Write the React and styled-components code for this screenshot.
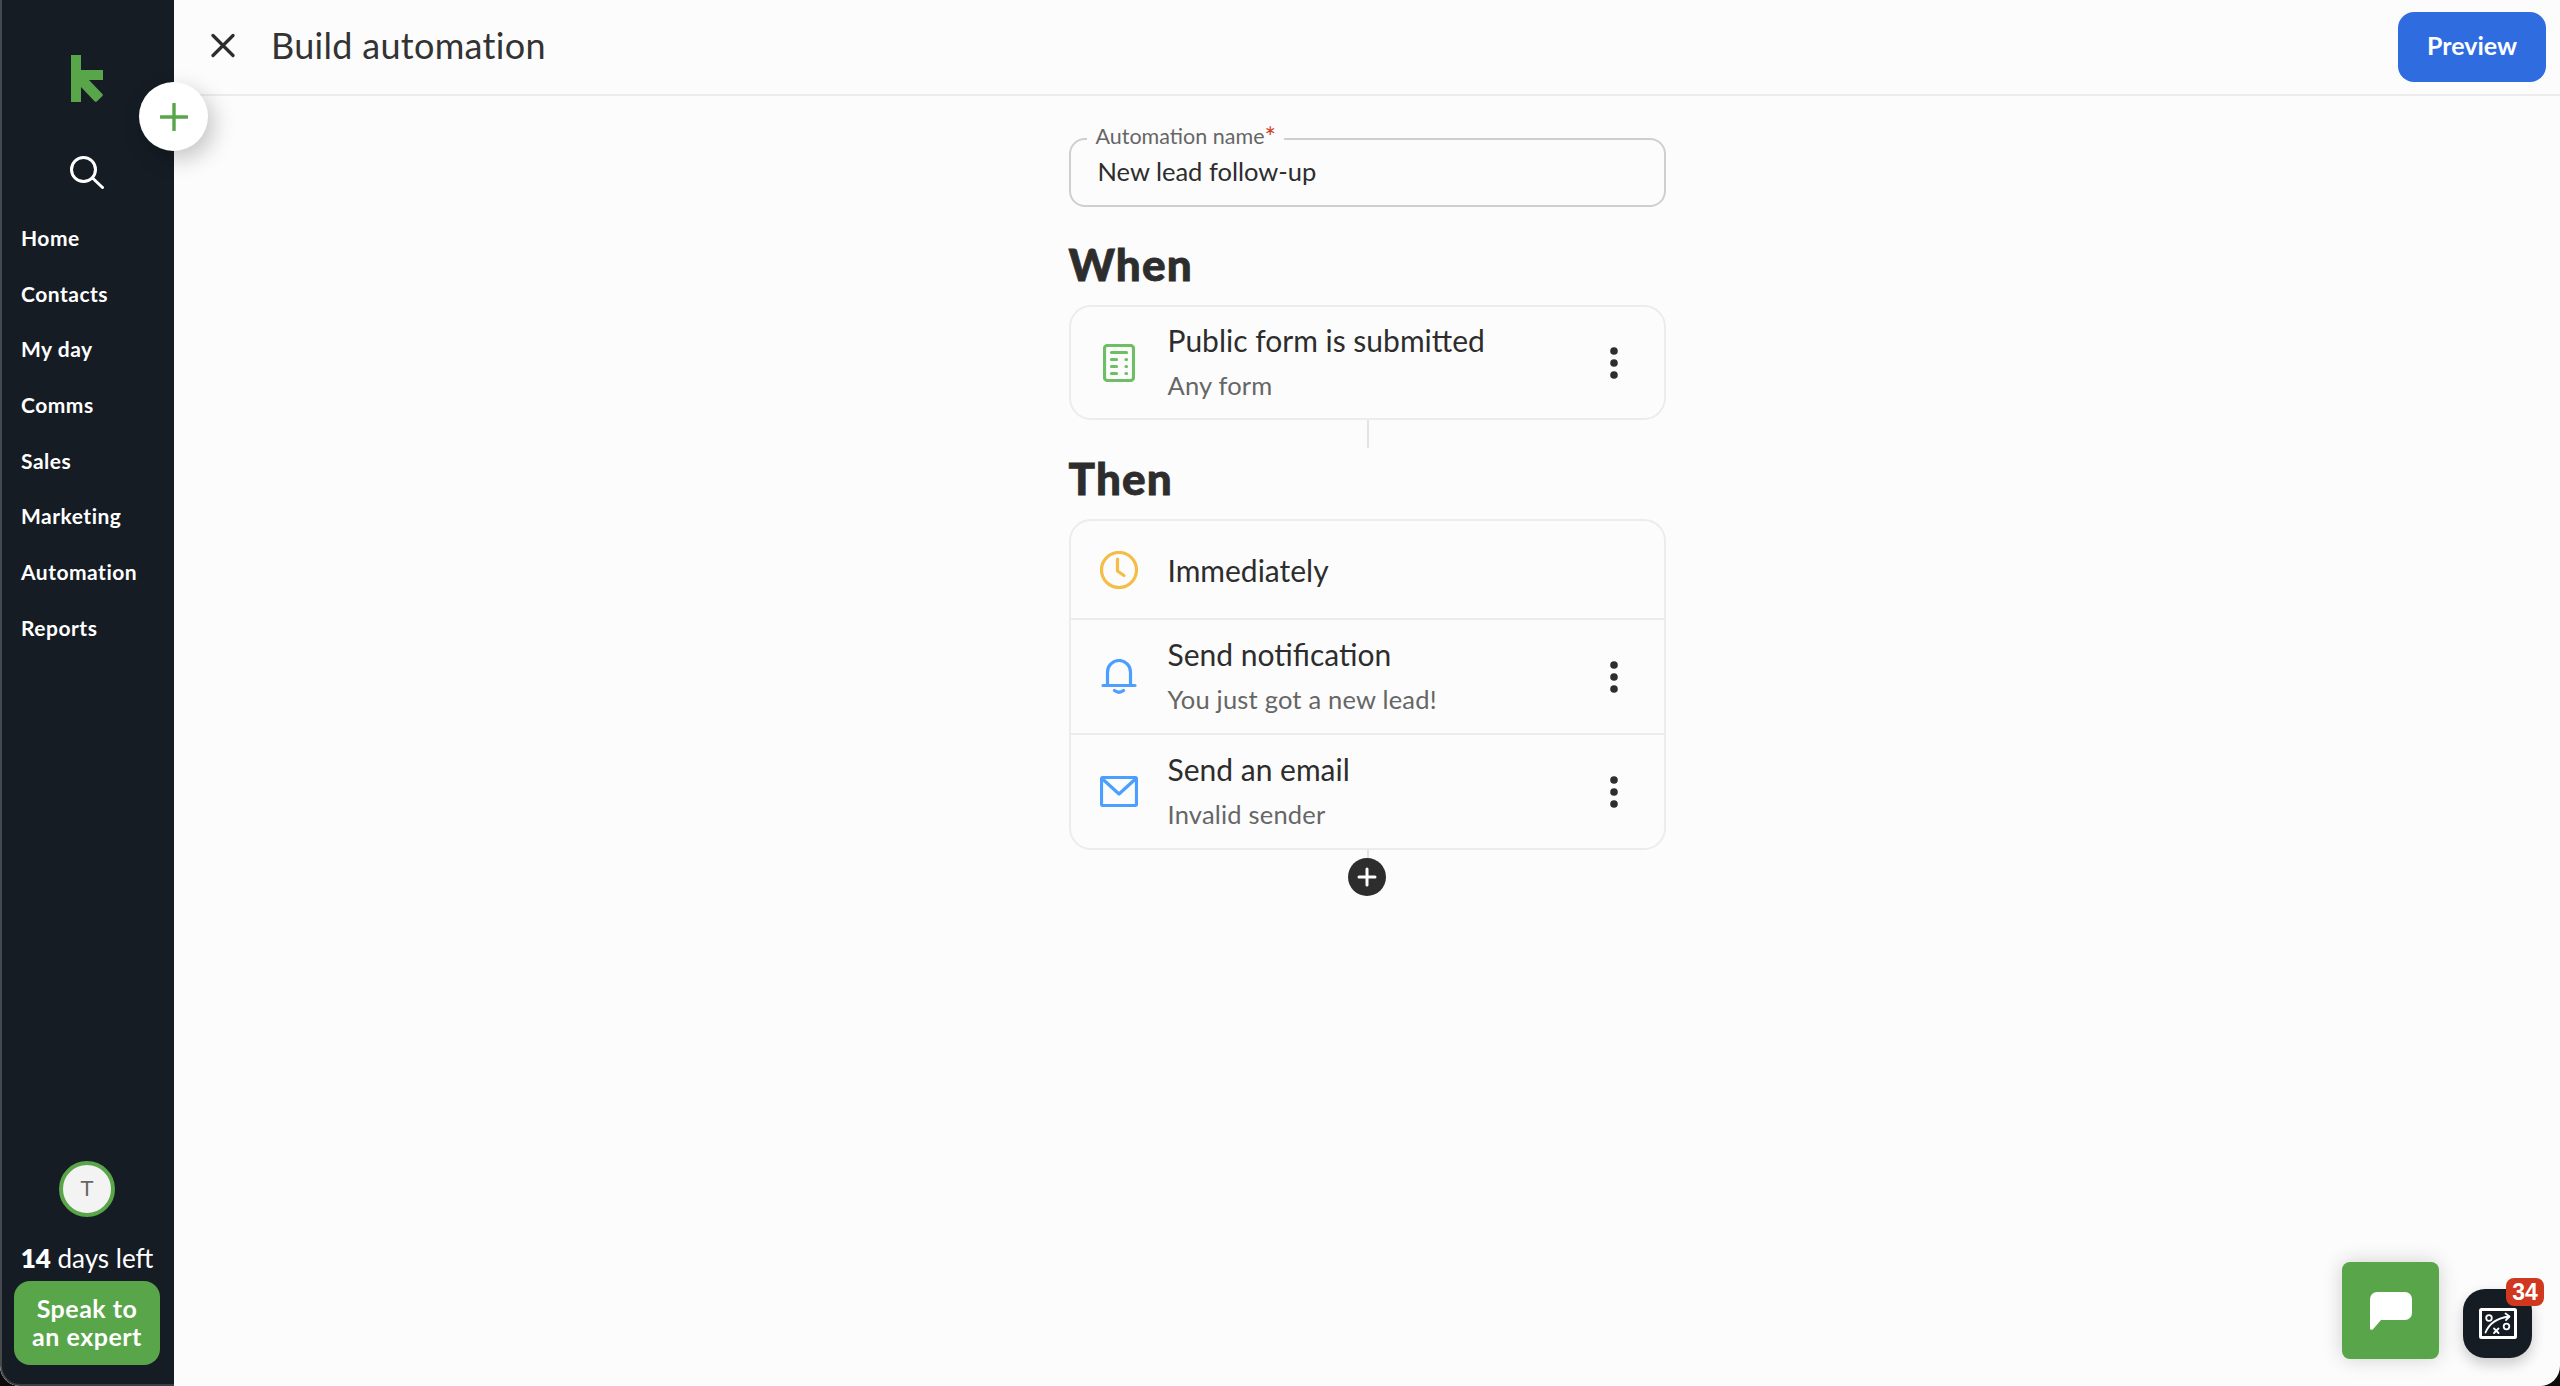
import React from 'react'
import styled, { createGlobalStyle } from 'styled-components'

const GlobalStyle = createGlobalStyle`
  html, body {
    margin: 0;
    height: 100%;
    background: #0b0d0c;
  }
  body {
    font-family: Lato, "Noto Sans", sans-serif;
    color: #2d2d2d;
  }
  * {
    box-sizing: border-box;
  }
`

const Frame = styled.div`
  position: relative;
  display: flex;
  width: 2560px;
  height: 1386px;
  overflow: hidden;
  border-radius: 0 0 20px 20px;
  background: #fcfcfc;
`

const Sidebar = styled.aside`
  flex: 0 0 174px;
  display: flex;
  flex-direction: column;
  align-items: center;
  padding: 55px 2px 0 0;
  border-left: 2px solid #45484c;
  border-bottom: 2px solid #3a3d42;
  border-bottom-left-radius: 20px;
  background: #161c24;
`

const SearchButton = styled.div`
  display: flex;
  margin-top: 54px;
`

const NavList = styled.nav`
  align-self: stretch;
  display: flex;
  flex-direction: column;
  gap: 23.7px;
  margin-top: 33px;
  padding-left: 19px;
`

const NavItem = styled.a`
  height: 32px;
  font-size: 21px;
  font-weight: 700;
  line-height: 32px;
  letter-spacing: 0.5px;
  color: #fff;
`

const SidebarBottom = styled.div`
  display: flex;
  flex-direction: column;
  align-items: center;
  margin-top: auto;
  padding-bottom: 19px;
`

const Avatar = styled.div`
  display: flex;
  align-items: center;
  justify-content: center;
  width: 56px;
  height: 56px;
  border: 4px solid #59a549;
  border-radius: 50%;
  background: #f3f3f3;
  font-family: "Liberation Sans", sans-serif;
  font-size: 22px;
  color: #666;
`

const DaysLeft = styled.div`
  margin-top: 25px;
  font-size: 26px;
  line-height: 32px;
  color: #fff;

  b {
    font-weight: 800;
  }
`

const SpeakButton = styled.button`
  width: 146px;
  height: 84px;
  margin-top: 7px;
  padding: 0 0 3px;
  border: none;
  border-radius: 16px;
  background: #59a549;
  font-family: inherit;
  font-size: 25px;
  font-weight: 700;
  line-height: 28px;
  letter-spacing: 0.5px;
  color: #fff;
`

const CreateButton = styled.button`
  position: absolute;
  top: 82px;
  left: 139px;
  display: flex;
  align-items: center;
  justify-content: center;
  width: 69px;
  height: 69px;
  padding: 0;
  border: none;
  border-radius: 50%;
  background: #fff;
  box-shadow: 6px 8px 22px rgba(0, 0, 0, 0.22);
`

const Main = styled.main`
  flex: 1;
  display: flex;
  flex-direction: column;
  min-width: 0;
`

const Header = styled.header`
  flex: 0 0 96px;
  display: flex;
  align-items: center;
  padding: 0 14px 4px 37px;
  border-bottom: 2px solid #ececec;
`

const CloseButton = styled.div`
  display: flex;
  margin-right: 36px;
`

const PageTitle = styled.h1`
  margin: 0;
  font-size: 36px;
  font-weight: 400;
  letter-spacing: 0.3px;
  color: #333;
`

const PreviewButton = styled.button`
  width: 148px;
  height: 70px;
  margin-left: auto;
  margin-top: 4px;
  padding: 0 0 4px;
  border: none;
  border-radius: 16px;
  background: #2f6ce0;
  font-family: inherit;
  font-size: 25px;
  font-weight: 700;
  color: #fff;
`

const Builder = styled.div`
  align-self: center;
  display: flex;
  flex-direction: column;
  width: 597px;
  padding-top: 42px;
`

const NameField = styled.div`
  position: relative;
  display: flex;
  align-items: center;
  height: 69px;
  padding: 0 27px 3px;
  border: 2px solid #cfcfcf;
  border-radius: 16px;
  font-size: 25.5px;
  color: #2d2d2d;
`

const NameLabel = styled.label`
  position: absolute;
  top: -16px;
  left: 16px;
  padding: 0 8px 0 9px;
  background: #fcfcfc;
  font-size: 21.5px;
  line-height: 24px;
  color: #666;

  i {
    position: relative;
    top: 3px;
    font-style: normal;
    font-size: 27px;
    line-height: 20px;
    color: #d0391f;
  }
`

const SectionTitle = styled.h2`
  height: 50px;
  margin: ${props => props.$top}px 0 16px;
  font-size: 44px;
  font-weight: 900;
  line-height: 50px;
  letter-spacing: 1.2px;
  -webkit-text-stroke: 0.8px #2d2d2d;
  color: #2d2d2d;
`

const Card = styled.div`
  display: flex;
  flex-direction: column;
  border: 2px solid #ececec;
  border-radius: 22px;
`

const Row = styled.div`
  display: flex;
  align-items: center;
  height: ${props => props.$height}px;
  padding: 0 46px 0 24px;
  & + & {
    border-top: 2px solid #ececec;
  }
`

const RowIcon = styled.div`
  flex: 0 0 48px;
  display: flex;
  justify-content: center;
  margin-right: 25px;
`

const RowText = styled.div`
  flex: 1;
  min-width: 0;
`

const RowTitle = styled.div`
  font-size: 30px;
  line-height: 44px;
  color: #2d2d2d;
`

const RowSub = styled.div`
  font-size: 25.5px;
  line-height: 46px;
  letter-spacing: 0.2px;
  color: #666;
`

const Connector = styled.div`
  align-self: center;
  width: 2px;
  height: ${props => props.$height}px;
  margin-left: 2px;
  background: #e3e3e3;
`

const AddStep = styled.button`
  align-self: center;
  display: flex;
  align-items: center;
  justify-content: center;
  width: 38px;
  height: 38px;
  padding: 0;
  border: none;
  border-radius: 50%;
  background: #2d2d2d;
`

const ChatButton = styled.button`
  position: absolute;
  top: 1262px;
  left: 2342px;
  display: flex;
  align-items: center;
  justify-content: center;
  width: 97px;
  height: 97px;
  padding: 0;
  border: none;
  border-radius: 8px;
  background: #59a549;
  box-shadow: 0 0 20px rgba(0, 0, 0, 0.18);
`

const PlayButton = styled.button`
  position: absolute;
  top: 1289px;
  left: 2463px;
  display: flex;
  align-items: center;
  justify-content: center;
  width: 69px;
  height: 69px;
  padding: 0;
  border: none;
  border-radius: 22px;
  background: #161c24;
  box-shadow: 0 6px 14px rgba(0, 0, 0, 0.2);
`

const Badge = styled.span`
  position: absolute;
  top: -11px;
  left: 43px;
  width: 38px;
  height: 28px;
  border-radius: 8px;
  background: #d0391f;
  font-size: 23px;
  font-weight: 800;
  line-height: 28px;
  text-align: center;
  color: #fff;
`

const Logo = () => (
  <svg width="32" height="47" viewBox="0 0 32 47">
    <path fill="#59a549" d="M0 0h10v15h22v10H18l13.4 14a1.5 1.5 0 0 1 0 2l-5.6 5.4a1.5 1.5 0 0 1-2 0L10 32v15H0z" />
  </svg>
)

const SearchIcon = () => (
  <svg width="34" height="33" viewBox="0 0 34 33" fill="none" stroke="#fff" strokeWidth="3" strokeLinecap="round">
    <circle cx="13.5" cy="13.5" r="12" />
    <path d="M22.5 22l10 9.5" />
  </svg>
)

const PlusIcon = () => (
  <svg width="28" height="28" viewBox="0 0 28 28" stroke="#59a549" strokeWidth="3.4" strokeLinecap="round">
    <path d="M14 1v26M1 14h26" />
  </svg>
)

const CloseIcon = () => (
  <svg width="24" height="25" viewBox="0 0 24 25" stroke="#2d2d2d" strokeWidth="3.2" strokeLinecap="round">
    <path d="M2 2.5l20 20M22 2.5l-20 20" />
  </svg>
)

const FormIcon = () => (
  <svg width="32" height="38" viewBox="0 0 32 38" fill="none" stroke="#6cbf62" strokeWidth="3.2" strokeLinecap="round">
    <rect x="1.5" y="1.5" width="29" height="35" rx="3" />
    <path d="M8.5 8.5h15M8.5 15.5h5M8.5 22.5h5M8.5 29.5h5" />
    <path d="M23 15.5h.5M23 22.5h.5M23 29.5h.5" />
  </svg>
)

const ClockIcon = () => (
  <svg width="38" height="38" viewBox="0 0 38 38" fill="none" stroke="#f5bd47" strokeWidth="3.2" strokeLinecap="round" strokeLinejoin="round">
    <circle cx="19" cy="19" r="17.5" />
    <path d="M17.5 8v12l6.5 4.5" />
  </svg>
)

const BellIcon = () => (
  <svg width="36" height="36" viewBox="0 0 36 36" fill="none" stroke="#4c9ffe" strokeWidth="3.2" strokeLinecap="round">
    <path d="M6.5 26V13a11.5 11.5 0 0 1 23 0v13" />
    <path d="M2 26.5h32M13.5 31.5q4.5 3.5 9 0" />
  </svg>
)

const MailIcon = () => (
  <svg width="38" height="31" viewBox="0 0 38 31" fill="none" stroke="#4c9ffe" strokeWidth="3.2" strokeLinejoin="round">
    <rect x="1.5" y="1.5" width="35" height="28" rx="1.5" />
    <path d="M2 2.5L19 18 36 2.5" />
  </svg>
)

const KebabIcon = () => (
  <svg width="8" height="32" viewBox="0 0 8 32" fill="#2d2d2d">
    <circle cx="4" cy="4" r="3.8" />
    <circle cx="4" cy="16" r="3.8" />
    <circle cx="4" cy="28" r="3.8" />
  </svg>
)

const AddIcon = () => (
  <svg width="20" height="20" viewBox="0 0 20 20" stroke="#fff" strokeWidth="3" strokeLinecap="round">
    <path d="M10 2v16M2 10h16" />
  </svg>
)

const ChatIcon = () => (
  <svg width="42" height="38" viewBox="0 0 42 38">
    <path fill="#fff" d="M7 0h28a7 7 0 0 1 7 7v14a7 7 0 0 1-7 7H11l-8 9.2c-1 1-3 .8-3-1V7a7 7 0 0 1 7-7z" />
  </svg>
)

const PlayIcon = () => (
  <svg width="38" height="31" viewBox="0 0 38 31" fill="none" stroke="#fff" strokeLinecap="round" strokeLinejoin="round">
    <rect x="1.5" y="1.5" width="35" height="28" rx="1" strokeWidth="3" />
    <g strokeWidth="1.8">
      <circle cx="10" cy="10" r="2.8" />
      <circle cx="27.5" cy="18.5" r="2.8" />
      <path d="M15 20.5l4.5 4.5M19.5 20.5L15 25" />
      <path d="M6.5 24.5C10 16 18 10 30 8.5" />
      <path d="M26.5 5.5L30.5 8.5 27 12" />
    </g>
  </svg>
)

const navItems = ['Home', 'Contacts', 'My day', 'Comms', 'Sales', 'Marketing', 'Automation', 'Reports']

const App = () => {
  return (
    <Frame>
      <GlobalStyle />
      <Sidebar>
        <Logo />
        <SearchButton><SearchIcon /></SearchButton>
        <NavList>
          {navItems.map(item => <NavItem key={item}>{item}</NavItem>)}
        </NavList>
        <SidebarBottom>
          <Avatar>T</Avatar>
          <DaysLeft><b>14</b> days left</DaysLeft>
          <SpeakButton>Speak to<br />an expert</SpeakButton>
        </SidebarBottom>
      </Sidebar>
      <CreateButton><PlusIcon /></CreateButton>
      <Main>
        <Header>
          <CloseButton><CloseIcon /></CloseButton>
          <PageTitle>Build automation</PageTitle>
          <PreviewButton>Preview</PreviewButton>
        </Header>
        <Builder>
          <NameField>
            <NameLabel>Automation name<i>*</i></NameLabel>
            New lead follow-up
          </NameField>
          <SectionTitle $top={32}>When</SectionTitle>
          <Card>
            <Row $height={111}>
              <RowIcon><FormIcon /></RowIcon>
              <RowText>
                <RowTitle>Public form is submitted</RowTitle>
                <RowSub>Any form</RowSub>
              </RowText>
              <KebabIcon />
            </Row>
          </Card>
          <Connector $height={28} />
          <SectionTitle $top={5}>Then</SectionTitle>
          <Card>
            <Row $height={97}>
              <RowIcon><ClockIcon /></RowIcon>
              <RowText>
                <RowTitle>Immediately</RowTitle>
              </RowText>
            </Row>
            <Row $height={115}>
              <RowIcon><BellIcon /></RowIcon>
              <RowText>
                <RowTitle>Send notification</RowTitle>
                <RowSub>You just got a new lead!</RowSub>
              </RowText>
              <KebabIcon />
            </Row>
            <Row $height={115}>
              <RowIcon><MailIcon /></RowIcon>
              <RowText>
                <RowTitle>Send an email</RowTitle>
                <RowSub>Invalid sender</RowSub>
              </RowText>
              <KebabIcon />
            </Row>
          </Card>
          <Connector $height={8} />
          <AddStep><AddIcon /></AddStep>
        </Builder>
      </Main>
      <ChatButton><ChatIcon /></ChatButton>
      <PlayButton>
        <PlayIcon />
        <Badge>34</Badge>
      </PlayButton>
    </Frame>
  )
}

export default App
